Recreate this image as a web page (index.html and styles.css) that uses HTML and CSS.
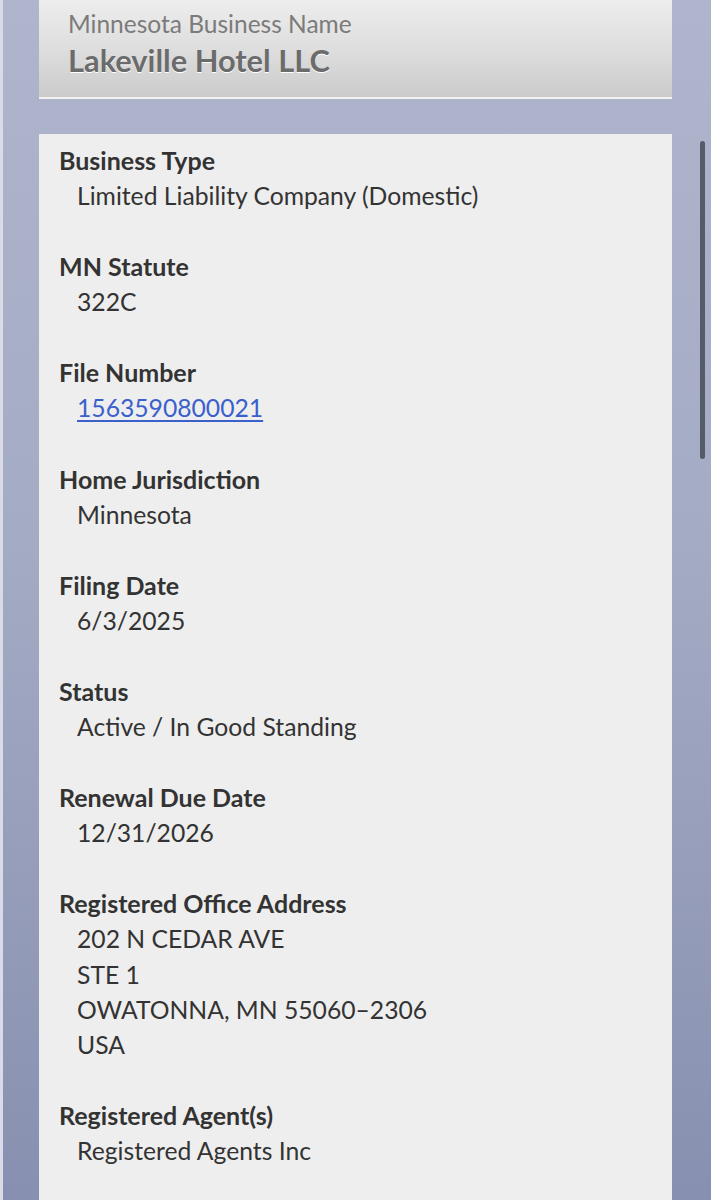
FILE: index.html
```html
<!DOCTYPE html>
<html lang="en">
<head>
    <meta charset="UTF-8">
    <meta name="viewport" content="width=device-width, initial-scale=1.0">
    <title>Lakeville Hotel LLC</title>
    <link rel="stylesheet" href="styles.css">
</head>
<body>
    <div class="page">
        <div class="name-card">
            <div class="name-label">Minnesota Business Name</div>
            <h1 class="name-title">Lakeville Hotel LLC</h1>
        </div>

        <div class="details">
            <dl>
                <div class="field">
                    <dt>Business Type</dt>
                    <dd>Limited Liability Company (Domestic)</dd>
                </div>
                <div class="field">
                    <dt>MN Statute</dt>
                    <dd>322C</dd>
                </div>
                <div class="field">
                    <dt>File Number</dt>
                    <dd><a href="#">1563590800021</a></dd>
                </div>
                <div class="field">
                    <dt>Home Jurisdiction</dt>
                    <dd>Minnesota</dd>
                </div>
                <div class="field">
                    <dt>Filing Date</dt>
                    <dd>6/3/2025</dd>
                </div>
                <div class="field">
                    <dt>Status</dt>
                    <dd>Active / In Good Standing</dd>
                </div>
                <div class="field">
                    <dt>Renewal Due Date</dt>
                    <dd>12/31/2026</dd>
                </div>
                <div class="field">
                    <dt>Registered Office Address</dt>
                    <dd>202 N CEDAR AVE<br>STE 1<br>OWATONNA, MN 55060&ndash;2306<br>USA</dd>
                </div>
                <div class="field">
                    <dt>Registered Agent(s)</dt>
                    <dd>Registered Agents Inc</dd>
                </div>
            </dl>
        </div>
    </div>
    <div class="scroll-thumb"></div>
</body>
</html>
```

FILE: styles.css
```css
html, body {
    height: 100%;
}
body {
    font-family: Lato, 'Open Sans', sans-serif;
    margin: 0;
    padding: 0;
    background: linear-gradient(to bottom, #aeb5cc 0%, #a4abc4 45%, #8790b0 100%);
    border-left: 3px solid #d9dce6;
    box-sizing: border-box;
    overflow: hidden;
    color: #333;
}
.page {
    padding: 0 39px 0 36px;
}
.name-card {
    background: linear-gradient(to bottom, #ededed 0%, #dedede 50%, #cbcbcb 100%);
    border-bottom: 2px solid #f2f2f2;
    padding: 7px 29px 0;
    box-sizing: border-box;
    height: 99px;
}
.name-label {
    font-size: 24.5px;
    color: #7b7b7b;
    line-height: 33px;
}
.name-title {
    margin: 0;
    font-size: 30.8px;
    font-weight: bold;
    color: #6b6b6b;
    line-height: 42px;
    text-shadow: 0 1px 0 #fff;
}
.details {
    margin-top: 35px;
    background-color: #eeeeee;
    padding: 9px 20px 40px;
    min-height: 1100px;
}
dl {
    margin: 0;
}
.field {
    margin-bottom: 36px;
}
dt {
    font-size: 25px;
    font-weight: bold;
    line-height: 35px;
    color: #333;
}
dd {
    margin: 0 0 0 18px;
    font-size: 24.7px;
    line-height: 35.2px;
    color: #333;
}
dd a {
    color: #3a60cc;
    text-decoration: underline;
    text-underline-offset: 3px;
}
.scroll-thumb {
    position: fixed;
    top: 141px;
    left: 700px;
    width: 5px;
    height: 318px;
    border-radius: 3px;
    background-color: #555b68;
}
```
